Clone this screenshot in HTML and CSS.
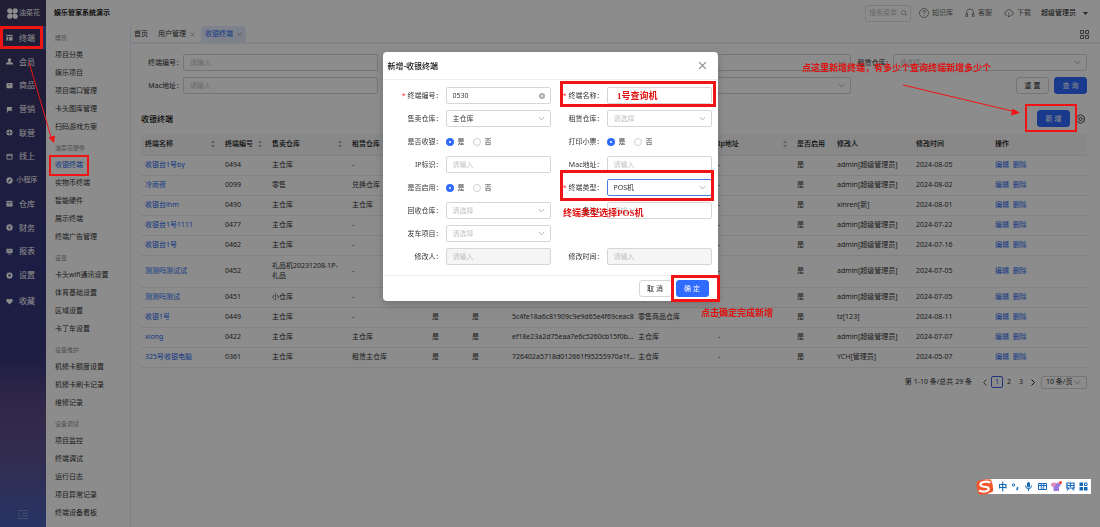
FILE: index.html
```html
<!DOCTYPE html>
<html lang="zh-CN">
<head>
<meta charset="utf-8">
<title>娱乐管家系统演示</title>
<link rel="stylesheet" href="styles.css">
</head>
<body>
<svg class="defs" aria-hidden="true">
  <symbol id="sort" viewBox="0 0 6 8"><path d="M3 0.5 5 3H1zM3 7.5 1 5h4z" fill="#aaa"/></symbol>
  <symbol id="cross" viewBox="0 0 8 8"><path d="M1 1l6 6M7 1L1 7" stroke="currentColor" fill="none"/></symbol>
</svg>
<div class="app">
  <nav class="rail" aria-label="主导航">
    <div class="brand">
      <svg width="11" height="11" viewBox="0 0 12 12" fill="#fff"><circle cx="3" cy="3" r="2.8"/><circle cx="9" cy="3" r="2.8"/><circle cx="3" cy="9" r="2.8"/><circle cx="9" cy="9" r="2.8"/><path d="M3 3h6v6H3z"/><path d="M6 4v4M4 6h4" stroke="#3c3866" stroke-width=".8"/></svg>
      <span>油菜花</span>
    </div>
    <div class="rail-menu">
      <a href="#" class="rail-item active"><svg class="ri" viewBox="0 0 8 8"><path d="M.5 1h7v6.500h-7z"/><path d="M.5 3h7M3 3v4.500" stroke="#3c3866"/></svg>终端</a>
      <a href="#" class="rail-item"><svg class="ri" viewBox="0 0 8 8"><circle cx="4" cy="2.300" r="2"/><path d="M3 3h2v1.500l3 1.200V7.500H0V5.700l3-1.200z"/></svg>会员</a>
      <a href="#" class="rail-item"><svg class="ri" viewBox="0 0 8 8"><rect x=".5" y="1" width="7" height="6" rx="1"/><path d="M2.500 2.800q1.500 2 3 0" stroke="#3c3866" stroke-width=".7" fill="none"/></svg>商品</a>
      <a href="#" class="rail-item"><svg class="ri" viewBox="0 0 8 8"><path d="M1 1h6.500L6 3.300 7.500 5.500H2V7.500H1z"/></svg>营销</a>
      <a href="#" class="rail-item"><svg class="ri" viewBox="0 0 8 8"><circle cx="4" cy="4" r="3.500"/><path d="M4 1v6M1 4h6" stroke="#3c3866" stroke-width=".8"/></svg>联营</a>
      <a href="#" class="rail-item"><svg class="ri" viewBox="0 0 8 8"><path d="M1 1.500h6v5.500H1zM1 3h6" fill="none" stroke="#fff"/></svg>线上</a>
      <a href="#" class="rail-item long"><svg class="ri" viewBox="0 0 8 8"><circle cx="4" cy="4" r="3.600"/><path d="M3 5.700q-1.500-.2-.8-1.400L3.800 4V3q1-1.300 2 0l-.6 1L4 4.300 3.800 5.500z" fill="#37387d"/></svg>小程序</a>
      <a href="#" class="rail-item"><svg class="ri" viewBox="0 0 8 8"><path d="M.5 1h7v6.500h-7z"/><path d="M.5 3h7M3 4.500h2" stroke="#37387d" stroke-width=".7"/></svg>仓库</a>
      <a href="#" class="rail-item"><svg class="ri" viewBox="0 0 8 8"><circle cx="4" cy="4" r="3.600"/><path d="M2.500 2 4 3.800 5.500 2M4 3.800V6.500M2.600 4.200h2.800" stroke="#37387d" stroke-width=".7" fill="none"/></svg>财务</a>
      <a href="#" class="rail-item"><svg class="ri" viewBox="0 0 8 8"><path d="M.5.8h7v5h-7zM2 6.500h4v1H2z"/><path d="M2 4l1.300-1.300 1 1L6 2" stroke="#37387d" stroke-width=".7" fill="none"/></svg>报表</a>
      <a href="#" class="rail-item"><svg class="ri" viewBox="0 0 8 8"><path d="M4 0l1 1 1.700-.2.200 1.700L8 4l-1.100 1.500-.2 1.700L5 7 4 8 3 7l-1.700.2-.2-1.700L0 4l1.100-1.500.2-1.700L3 1z"/><circle cx="4" cy="4" r="1.300" fill="#37387d"/></svg>设置</a>
    </div>
    <a href="#" class="rail-item fav"><svg class="ri" viewBox="0 0 8 8"><path d="M4 7.500.6 4Q-.3 2.200 1.200 1 2.900.2 4 1.900 5.100.2 6.800 1 8.300 2.200 7.400 4z"/></svg>收藏</a>
    <button class="collapse" aria-label="收起菜单"><svg width="10" height="9" viewBox="0 0 10 9"><path d="M0 .5h10M4 3.200h6M4 5.800h6M0 8.500h10M2 3L0 4.500 2 6" stroke="#8c97cc" stroke-width=".8" fill="none"/></svg></button>
  </nav>

  <div class="body">
    <header class="topbar">
      <h1>娱乐管家系统演示</h1>
      <div class="tools">
        <label class="quick"><input type="text" placeholder="搜索菜单" aria-label="搜索菜单"><svg width="6" height="6" viewBox="0 0 8 8" fill="none" stroke="#999"><circle cx="3.500" cy="3.500" r="2.800"/><path d="M5.500 5.500 8 8"/></svg></label>
        <a href="#"><svg width="10" height="10" viewBox="0 0 10 10" fill="none" stroke="#777" stroke-width=".8"><circle cx="5" cy="5" r="4.500"/><path d="M3.600 4q0-1.500 1.400-1.500T6.400 4Q6.300 4.700 5 5.300V6M5 7v.9"/></svg>知识库</a>
        <a href="#"><svg width="10" height="10" viewBox="0 0 10 10" fill="none" stroke="#777" stroke-width=".8"><path d="M1.500 6V4.500a3.500 3.500 0 0 1 7 0V6M1 5.500h1.500v3H1zM7.500 5.500H9v3H7.500z"/></svg>客服</a>
        <a href="#"><svg width="10" height="10" viewBox="0 0 10 10" fill="none" stroke="#777" stroke-width=".8"><path d="M3 7H2Q.3 6.500.6 4.800 1 3.500 2.300 3.600 3 1.500 5 1.500T7.700 3.600Q9.200 3.600 9.400 5 9.500 6.700 8 7H7M5 4.500V9M3.700 7.700 5 9l1.300-1.300"/></svg>下载</a>
        <button class="user">超级管理员<svg width="5" height="3" viewBox="0 0 5 3"><path d="M0 0h5L2.500 3z" fill="#444"/></svg></button>
      </div>
    </header>
    <div class="columns">
      <aside class="sub">
        <h2>娱乐</h2>
        <a href="#">项目分类</a><a href="#">娱乐项目</a><a href="#">项目端口管理</a><a href="#">卡头图库管理</a><a href="#">扫码游戏方案</a>
        <h2>油菜花硬件</h2>
        <a href="#" class="on">收银终端</a><a href="#">实物币终端</a><a href="#">智能硬件</a><a href="#">展示终端</a><a href="#">终端广告管理</a>
        <h2>设置</h2>
        <a href="#">卡头wifi通讯设置</a><a href="#">体育基础设置</a><a href="#">区域设置</a><a href="#">卡丁车设置</a>
        <h2>设备维护</h2>
        <a href="#">机修卡额度设置</a><a href="#">机修卡刷卡记录</a><a href="#">维修记录</a>
        <h2>设备调试</h2>
        <a href="#">项目监控</a><a href="#">终端调试</a><a href="#">运行日志</a><a href="#">项目异常记录</a><a href="#">终端设备看板</a>
      </aside>
      <main>
        <div class="tabs">
          <a href="#">首页</a>
          <a href="#">用户管理<svg class="x"><use href="#cross"/></svg></a>
          <a href="#" class="cur">收银终端<svg class="x"><use href="#cross"/></svg></a>
          <svg class="apps" width="9" height="9" viewBox="0 0 9 9" fill="none" stroke="#555" stroke-width=".9"><path d="M.5.5h3v3h-3zM5.500.5h3v3h-3zM.5 5.500h3v3h-3zM5.500 5.500h3v3h-3z"/></svg>
        </div>
        <section class="content">
          <form class="search">
            <div class="field"><label for="s1">终端编号：</label><input class="ctl" id="s1" type="text" placeholder="请输入"></div>
            <div class="field c3"><span></span><select class="ctl ph" aria-label="售卖仓库"><option>请选择</option></select></div>
            <div class="field c4"><label for="s2">租赁仓库：</label><select class="ctl ph" id="s2"><option>请选择</option></select></div>
            <div class="field"><label for="s3">Mac地址：</label><input class="ctl" id="s3" type="text" placeholder="请输入"></div>
            <div class="field c3"><span></span><select class="ctl ph" aria-label="是否启用"><option>请选择</option></select></div>
            <div class="actions c4"><button type="reset" class="btn">重 置</button><button type="button" class="btn primary">查 询</button></div>
          </form>
          <div class="list-head">
            <h3>收银终端</h3>
            <button class="btn primary">新 增</button>
            <button class="gear" aria-label="列设置"><svg width="9" height="10" viewBox="0 0 9 10" fill="none" stroke="#333" stroke-width=".9"><path d="M4.500.6 8.300 2.800v4.400L4.500 9.400.7 7.200V2.800z"/><circle cx="4.500" cy="5" r="1.600"/></svg></button>
          </div>
          <table>
            <colgroup><col class="w80"><col class="w47"><col class="w80"><col class="w80"><col class="w40"><col class="w40"><col class="w126"><col class="w80"><col class="w79"><col class="w40"><col class="w79"><col class="w79"><col></colgroup>
            <thead><tr><th>终端名称<svg class="sort"><use href="#sort"/></svg></th><th>终端编号<svg class="sort"><use href="#sort"/></svg></th><th>售卖仓库<svg class="sort"><use href="#sort"/></svg></th><th>租赁仓库</th><th></th><th></th><th></th><th></th><th>Ip地址<svg class="sort"><use href="#sort"/></svg></th><th>是否启用</th><th>修改人</th><th>修改时间</th><th>操作</th></tr></thead>
            <tbody>
              <tr><td><a href="#">收银台1号by</a></td><td>0494</td><td>主仓库</td><td>-</td><td></td><td></td><td></td><td></td><td>-</td><td>是</td><td>admin[超级管理员]</td><td>2024-08-05</td><td><a href="#">编辑</a> <a href="#">删除</a></td></tr>
              <tr><td><a href="#">冷雨夜</a></td><td>0099</td><td>零售</td><td>兑换仓库</td><td></td><td></td><td></td><td></td><td>-</td><td>是</td><td>admin[超级管理员]</td><td>2024-08-02</td><td><a href="#">编辑</a> <a href="#">删除</a></td></tr>
              <tr><td><a href="#">收银台lhm</a></td><td>0490</td><td>主仓库</td><td>主仓库</td><td></td><td></td><td></td><td></td><td>-</td><td>是</td><td>xinren[新]</td><td>2024-08-01</td><td><a href="#">编辑</a> <a href="#">删除</a></td></tr>
              <tr><td><a href="#">收银台1号1111</a></td><td>0477</td><td>主仓库</td><td>-</td><td></td><td></td><td></td><td></td><td>-</td><td>是</td><td>admin[超级管理员]</td><td>2024-07-22</td><td><a href="#">编辑</a> <a href="#">删除</a></td></tr>
              <tr><td><a href="#">收银台1号</a></td><td>0462</td><td>主仓库</td><td>-</td><td></td><td></td><td></td><td></td><td>-</td><td>是</td><td>admin[超级管理员]</td><td>2024-07-16</td><td><a href="#">编辑</a> <a href="#">删除</a></td></tr>
              <tr class="tall"><td><a href="#">测测吗测试试</a></td><td>0452</td><td class="wrap">礼品机20231208-1P-礼品</td><td>-</td><td></td><td></td><td></td><td></td><td>-</td><td>是</td><td>admin[超级管理员]</td><td>2024-07-05</td><td><a href="#">编辑</a> <a href="#">删除</a></td></tr>
              <tr><td><a href="#">测测吗测试</a></td><td>0451</td><td>小仓库</td><td>-</td><td></td><td></td><td></td><td></td><td>-</td><td>是</td><td>admin[超级管理员]</td><td>2024-07-05</td><td><a href="#">编辑</a> <a href="#">删除</a></td></tr>
              <tr><td><a href="#">收银1号</a></td><td>0449</td><td>主仓库</td><td>-</td><td>是</td><td>是</td><td>5c4fe18a6c81909c9e9d65e4f69ceac8</td><td>零售商品仓库</td><td>-</td><td>是</td><td>tz[123]</td><td>2024-08-11</td><td><a href="#">编辑</a> <a href="#">删除</a></td></tr>
              <tr><td><a href="#">xiong</a></td><td>0422</td><td>主仓库</td><td>主仓库</td><td>是</td><td>是</td><td>ef18e23a2d75eaa7e6c5260cb15f0b...</td><td>主仓库</td><td>-</td><td>是</td><td>admin[超级管理员]</td><td>2024-07-07</td><td><a href="#">编辑</a> <a href="#">删除</a></td></tr>
              <tr><td><a href="#">325号收银电脑</a></td><td>0361</td><td>主仓库</td><td>租赁主仓库</td><td>是</td><td>是</td><td>726402a5718d012661f95255970a1f...</td><td>主仓库</td><td>-</td><td>是</td><td>YCH[管理员]</td><td>2024-05-07</td><td><a href="#">编辑</a> <a href="#">删除</a></td></tr>
            </tbody>
          </table>
          <div class="pager">
            <span class="total">第 1-10 条/总共 29 条</span>
            <button aria-label="上一页"><svg width="4" height="7" viewBox="0 0 4 7"><path d="M3.500.5l-3 3 3 3" fill="none" stroke="#555"/></svg></button>
            <button class="cur">1</button><button>2</button><button>3</button>
            <button aria-label="下一页"><svg width="4" height="7" viewBox="0 0 4 7"><path d="M.5.5l3 3-3 3" fill="none" stroke="#222"/></svg></button>
            <select class="ctl" aria-label="每页条数"><option>10 条/页</option></select>
          </div>
        </section>
      </main>
    </div>
  </div>
</div>

<div class="mask">
  <div class="modal" role="dialog" aria-labelledby="mt">
    <div class="modal-head"><h2 id="mt">新增-收银终端</h2><button aria-label="关闭"><svg width="9" height="9"><use href="#cross"/></svg></button></div>
    <form class="modal-form">
      <div class="row"><label for="f1"><i>*</i> 终端编号：</label><span class="clearable"><input class="ctl" id="f1" type="text" value="0530"><svg width="6" height="6" viewBox="0 0 8 8"><circle cx="4" cy="4" r="4" fill="#aaa"/><path d="M2.500 2.500l3 3M5.500 2.500l-3 3" stroke="#fff"/></svg></span></div>
      <div class="row"><label for="f2"><i>*</i> 终端名称：</label><input class="ctl" id="f2" type="text"></div>
      <div class="row"><label for="f3">售卖仓库：</label><select class="ctl" id="f3"><option>主仓库</option></select></div>
      <div class="row"><label for="f4">租赁仓库：</label><select class="ctl ph" id="f4"><option>请选择</option></select></div>
      <div class="row"><span class="lab">是否收银：</span><span class="radios"><label><input type="radio" name="a" checked>是</label><label><input type="radio" name="a">否</label></span></div>
      <div class="row"><span class="lab">打印小票：</span><span class="radios"><label><input type="radio" name="b" checked>是</label><label><input type="radio" name="b">否</label></span></div>
      <div class="row"><label for="f5">IP标识：</label><input class="ctl" id="f5" type="text" placeholder="请输入"></div>
      <div class="row"><label for="f6">Mac地址：</label><input class="ctl" id="f6" type="text" placeholder="请输入"></div>
      <div class="row"><span class="lab">是否启用：</span><span class="radios"><label><input type="radio" name="c" checked>是</label><label><input type="radio" name="c">否</label></span></div>
      <div class="row"><label for="f7"><i>*</i> 终端类型：</label><select class="ctl focus" id="f7"><option>POS机</option></select></div>
      <div class="row"><label for="f8">回收仓库：</label><select class="ctl ph" id="f8"><option>请选择</option></select></div>
      <div class="row"><label for="f9">备注：</label><input class="ctl" id="f9" type="text" placeholder="请输入"></div>
      <div class="row"><label for="f10">发车项目：</label><select class="ctl ph" id="f10"><option>请选择</option></select></div>
      <div class="row"></div>
      <div class="row"><label for="f11">修改人：</label><input class="ctl" id="f11" type="text" placeholder="请输入" disabled></div>
      <div class="row"><label for="f12">修改时间：</label><input class="ctl" id="f12" type="text" placeholder="请输入" disabled></div>
    </form>
    <div class="modal-foot"><button class="btn">取 消</button><button class="btn primary">确 定</button></div>
  </div>
</div>

<div class="notes">
  <svg width="1100" height="527" viewBox="0 0 1100 527" fill="none" stroke="#f01414">
    <g stroke-width="3"><path d="M1.500 27.500h40v20h-40zM561.500 82.500h153v23h-153zM561.500 171.500h151v28h-151zM672.500 276.500h46v24h-46z"/></g>
    <g stroke-width="2"><path d="M50 156h38v19H50zM1026 105h50v26h-50z"/></g>
    <path d="M29 62l22 75M903 85l109 26"/>
    <path d="M54 143l-5.500-5.500 6.500-2zM1020 113l-9 2.500 1.500-7z" fill="#f01414" stroke="none"/>
  </svg>
  <span class="note n1">点这里新增终端，有多少个查询终端新增多少个</span>
  <span class="note n2">1号查询机</span>
  <span class="note n3">终端类型选择POS机</span>
  <span class="note n4">点击确定完成新增</span>
</div>

<div class="ime">
  <svg width="18" height="16" viewBox="0 0 18 16"><path d="M1 2.500Q8-.5 15 .5q2.500 6 2 12Q9 17 2.500 15-.5 8 1 2.500z" fill="#f0562a"/><path d="M14.500 3.500Q9 1.600 5 4q-2 2.700 2 3.500l4.500.7q2.500 1.600 0 3.500-4 1.800-8.500-.2" fill="none" stroke="#fff" stroke-width="2.200"/></svg>
  <span>中</span>
  <svg width="9" height="9" viewBox="0 0 9 9"><circle cx="2.500" cy="3" r="1.200" fill="none" stroke="#1468b8"/><path d="M6.500 5v1.500L5.500 8" stroke="#1468b8" stroke-width="1.400" fill="none"/></svg>
  <svg width="9" height="9" viewBox="0 0 9 9" fill="none" stroke="#1468b8"><rect x="3" y="0" width="3" height="5.500" rx="1.500" fill="#1468b8" stroke="none"/><path d="M1.500 3.500q0 3.200 3 3.200t3-3.200M4.500 6.500V9"/></svg>
  <svg width="9" height="9" viewBox="0 0 9 9" fill="none" stroke="#1468b8"><path d="M.5 1.500h8v6h-8zM1 3.500h7M3.200 2v3M5.800 2v3M2.500 6h4"/></svg>
  <svg width="11" height="11" viewBox="0 0 11 11"><path d="M0 3l3-1.500 2 1 2-1L10 3 9 5.500H8V10H2.500V5.500H1z" fill="#9a7be0"/><path d="M0 3l3-1.500 2 1-1 3H1z" fill="#e58ab5"/><circle cx="9.500" cy="1.500" r="1.500" fill="#f04030"/></svg>
  <svg width="9" height="9" viewBox="0 0 9 9" fill="none" stroke="#1468b8" stroke-width="1.200"><path d="M1 6V1h7v5M1 3.500h7M4.500 1v4M0 6h9M3 6 1 8.500M6 6l2 2.500"/></svg>
  <svg width="9" height="9" viewBox="0 0 9 9" fill="#1468b8"><path d="M.5.5H4V4H.5zM.5 5H4v3.500H.5zM5 5h3.500v3.500H5z"/><path d="M5.500 1h2.500v2.500H5.500z" fill="none" stroke="#1468b8"/></svg>
</div>
</body>
</html>
```
FILE: styles.css
```css
* { box-sizing: border-box; }
body {
  margin: 0;
  background: #fff;
  color: #333;
  font: 7px/10px "Noto Sans", "Noto Sans CJK SC", sans-serif;
}
h1, h2, h3 { margin: 0; font-size: inherit; }
a { color: inherit; text-decoration: none; }
button, input, select { font: inherit; color: inherit; margin: 0; }
button { background: none; border: 0; padding: 0; }
svg { flex: none; }
.defs { position: absolute; width: 0; height: 0; }

.app { display: flex; min-height: 100vh; }
.rail {
  width: 46px;
  flex: none;
  display: flex;
  flex-direction: column;
  color: #fff;
  background: linear-gradient(#3c3660, #33367c 50%, #38387c 68%, #5c4a86 78%, #5c5190 86%, #4a60b8);
}
.brand { height: 26px; display: flex; align-items: center; gap: 1px; padding-left: 7px; }
.rail-menu { display: grid; grid-auto-rows: 1fr; min-height: 261px; }
.rail-item { display: grid; grid-template-columns: 8px 22px; column-gap: 2px; align-items: center; padding-left: 6px; text-align: center; white-space: nowrap; font-size: 8px; }
.rail-item.long { font-size: 7px; }
.rail-item.active { border-right: 3px solid #3f55a8; }
.rail-item.fav { height: 28px; }
.ri { width: 7px; height: 7px; fill: #fff; }
.collapse { margin: auto 0 8px 18px; width: 10px; height: 9px; display: flex; }

.body { flex: 1; min-width: 0; display: flex; flex-direction: column; }
.topbar { height: 26px; display: flex; align-items: center; justify-content: space-between; padding: 0 12px 0 8px; }
.topbar h1 { color: #111; }
.tools { display: flex; align-items: center; gap: 12px; color: #666; }
.tools a, .user { display: flex; align-items: center; gap: 3px; }
.user { color: #111; gap: 7px; margin-left: -2px; }
.quick { display: flex; align-items: center; width: 46px; height: 17px; border: 1px solid #e2e2e2; border-radius: 2px; padding: 0 3px; margin-right: -4px; }
.quick input { width: 100%; min-width: 0; border: 0; padding: 0; background: none; }
.columns { flex: 1; display: flex; }
.sub { width: 85px; flex: none; padding: 4px 0 0 9px; border-right: 1px solid #e2e6fa; }
.sub h2 { height: 16px; line-height: 16px; font-weight: 400; color: #8f8f8f; font-size: 6px; }
.sub a { display: block; height: 18px; line-height: 18px; white-space: nowrap; }
.sub a + h2 { margin-top: 4px; }
.sub .on { color: #2468f2; }

main { flex: 1; min-width: 0; }
.tabs { display: flex; align-items: center; height: 18px; border-bottom: 2px solid #eceef8; padding: 0 11px 0 3px; gap: 2px; }
.tabs a { display: flex; align-items: center; gap: 4px; height: 16px; padding: 0 4px; border-radius: 3px 3px 0 0; }
.tabs a:first-child { padding-left: 0; }
.tabs .cur { background: #e4ecff; color: #2468f2; }
.x { width: 5px; height: 5px; color: #888; }
.apps { margin-left: auto; }

.content { padding: 10px 13px 0 10px; }
.search { display: grid; grid-template-columns: repeat(4, 1fr); row-gap: 6px; }
.field { display: grid; grid-template-columns: 42px 1fr; align-items: center; }
.field label { text-align: right; white-space: nowrap; }
.c3 { grid-column: 3; }
.c4 { grid-column: 4; }
.ctl {
  appearance: none;
  width: 100%;
  min-width: 0;
  height: 17px;
  border: 1px solid #d6d6d6;
  border-radius: 2px;
  padding: 0 6px;
  background: #fff;
  outline: 0;
}
select.ctl {
  background: #fff url("data:image/svg+xml,%3Csvg xmlns='http://www.w3.org/2000/svg' width='7' height='5'%3E%3Cpath d='M1 1l2.500 3L6 1' fill='none' stroke='%23bbb'/%3E%3C/svg%3E") no-repeat right 5px center;
}
::placeholder { color: #bfbfbf; opacity: 1; }
.ctl.ph { color: #bfbfbf; }
.ctl.focus { border-color: #4a7fe0; }
.ctl:disabled { background: #f5f5f5; }
.actions { display: flex; justify-content: flex-end; gap: 5px; }
.btn { width: 33px; height: 17px; border: 1px solid #d6d6d6; border-radius: 3px; background: #fff; color: #222; white-space: nowrap; }
.btn.primary { background: #2f6bff; border-color: #2f6bff; color: #fff; }

.list-head { display: flex; align-items: center; height: 17px; margin: 16px 0 7px; }
.list-head h3 { flex: 1; font-size: 8px; font-weight: 500; color: #111; }
.gear { width: 17px; padding-left: 6px; display: flex; }
table { width: 100%; table-layout: fixed; border-collapse: collapse; }
.w80 { width: 80px; }
.w79 { width: 79px; }
.w47 { width: 47px; }
.w40 { width: 40px; }
.w126 { width: 126px; }
th, td { height: 20px; padding: 0 0 0 4px; text-align: left; white-space: nowrap; border-bottom: 1px solid #ededed; }
th { height: 21px; background: #f8f8f8; font-weight: 500; color: #111; }
td a { color: #2468f2; margin-right: 2px; }
.tall td { height: 32px; }
td.wrap { white-space: normal; padding-right: 8px; }
.sort { float: right; width: 6px; height: 8px; margin: 1px 5px 0 0; }
.pager { display: flex; align-items: center; justify-content: flex-end; padding-top: 8px; }
.total { margin-right: 7px; }
.pager button { width: 12px; height: 12px; display: flex; align-items: center; justify-content: center; }
.pager .cur { border: 1px solid #3f5fe0; border-radius: 2px; color: #2f54eb; }
.pager .ctl { width: 46px; height: 13px; padding: 0 4px; margin-left: 2px; }

.mask { position: fixed; inset: 0; background: rgba(0, 0, 0, .45); display: flex; justify-content: center; align-items: flex-start; padding-top: 52px; }
.modal { width: 335px; background: #fff; border-radius: 4px; box-shadow: 0 3px 10px rgba(0, 0, 0, .2); }
.modal-head { height: 28px; display: flex; align-items: center; justify-content: space-between; padding: 0 11px 0 5px; border-bottom: 1px solid #eee; color: #111; }
.modal-head h2 { font-size: 8px; font-weight: 500; }
.modal-head button { display: flex; color: #888; }
.modal-form { display: grid; grid-template-columns: 1fr 1fr; row-gap: 6px; padding: 7px 6px 10px 7px; }
.row { display: grid; grid-template-columns: 56px 1fr; align-items: center; height: 17px; }
.row > label, .lab { text-align: right; white-space: nowrap; padding-right: 3px; }
.row i { color: #f33; font-style: normal; }
.clearable { display: flex; align-items: center; }
.clearable svg { margin-left: -12px; margin-right: 6px; }
.radios { display: flex; gap: 8px; }
.radios label { display: flex; align-items: center; gap: 4px; }
.radios input { appearance: none; width: 8px; height: 8px; border: 1px solid #d0d0d0; border-radius: 50%; background: #fff; }
.radios input:checked { border: 3px solid #2f6bff; }
.modal-foot { height: 26px; display: flex; align-items: center; justify-content: flex-end; gap: 4px; padding-right: 9px; border-top: 1px solid #eee; }

.notes { position: absolute; left: 0; top: 0; pointer-events: none; }
.notes svg { display: block; }
.note { position: absolute; white-space: nowrap; color: #e01010; font: bold 9px/12px "Liberation Serif", "Noto Sans CJK SC", serif; }
.n1 { left: 802px; top: 62px; }
.n2 { left: 617px; top: 90px; }
.n3 { left: 563px; top: 207px; }
.n4 { left: 701px; top: 307px; }
.ime { position: absolute; left: 976px; top: 479px; width: 115px; height: 15px; display: flex; align-items: center; justify-content: space-between; padding-right: 3px; background: linear-gradient(90deg, transparent 9px, #fff 9px); color: #1468b8; font-size: 9px; font-weight: 700; }
```
